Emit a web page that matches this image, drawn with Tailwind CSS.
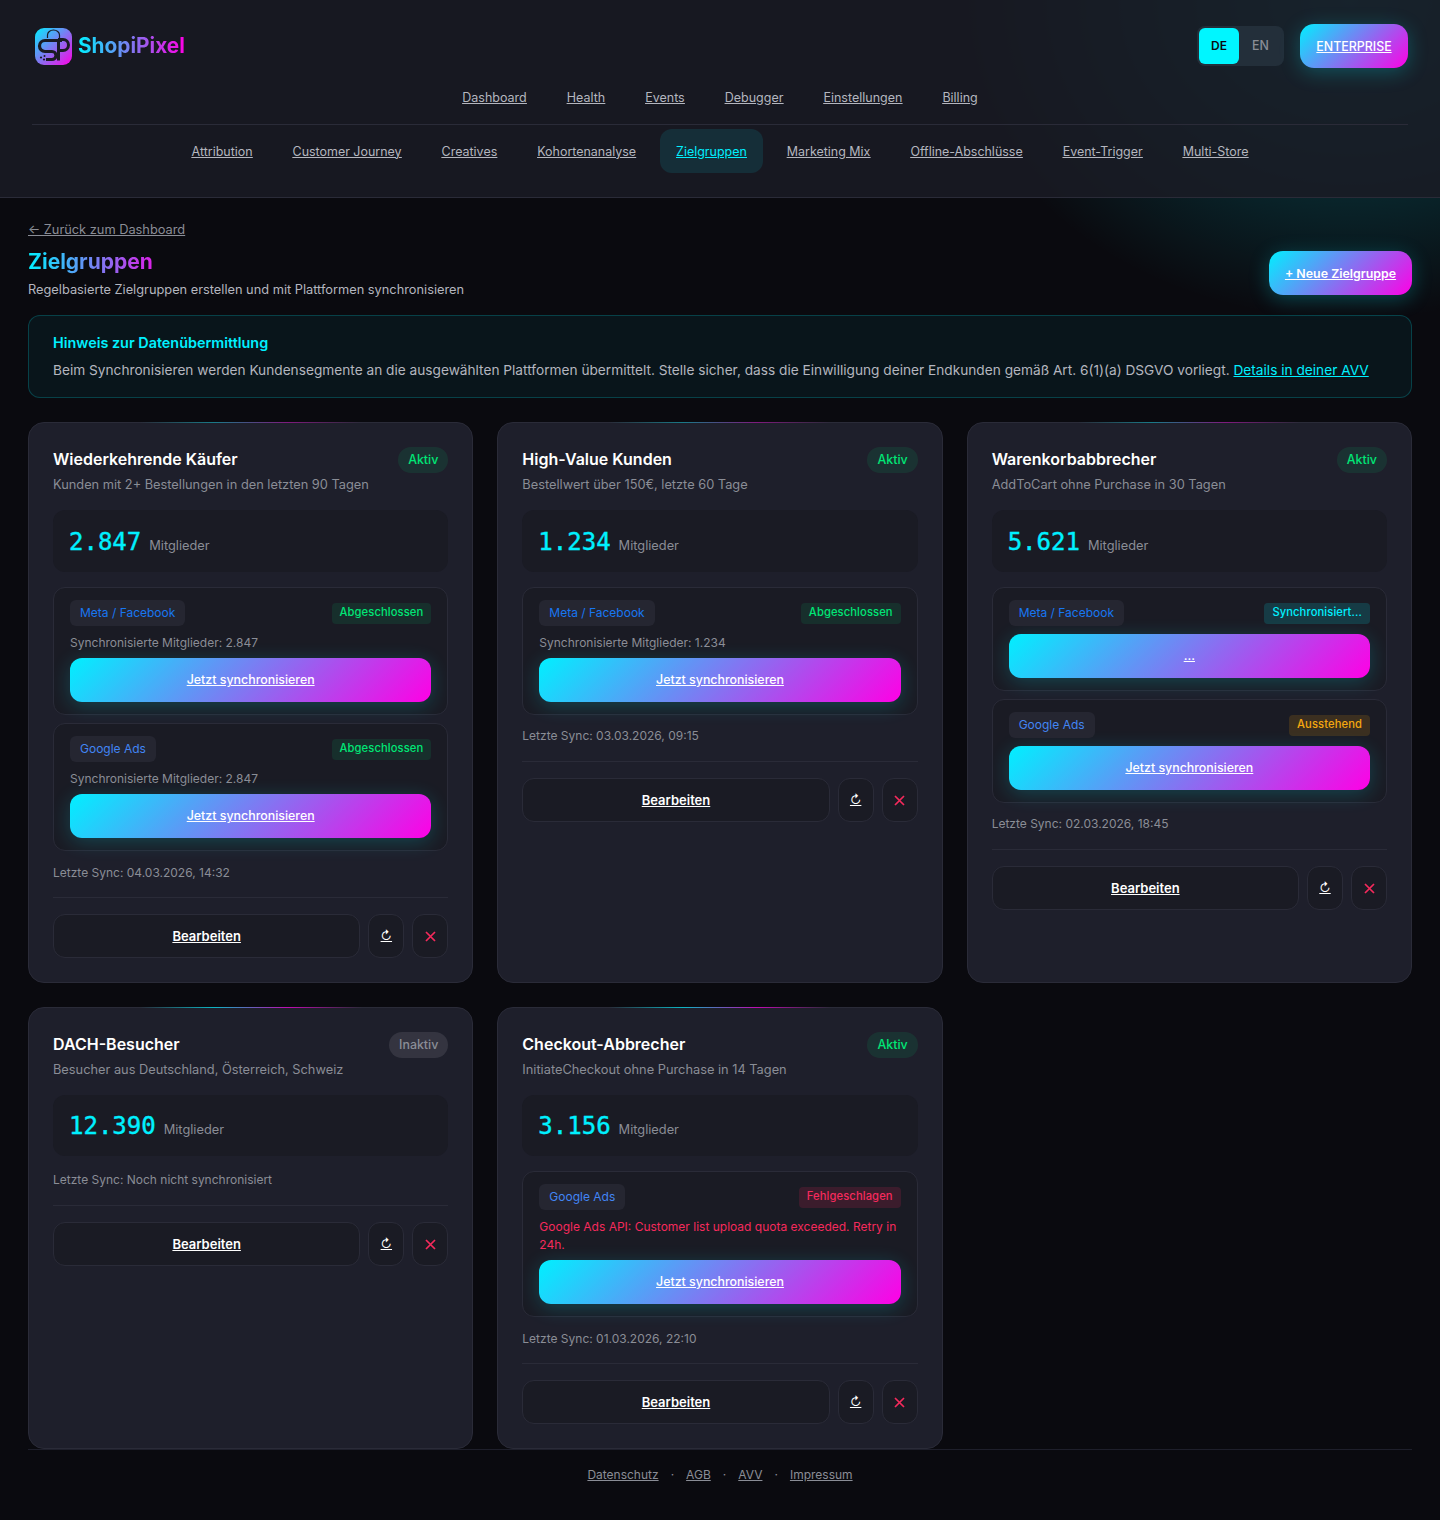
<!DOCTYPE html>
<html lang="de">
<head>
  <meta charset="UTF-8"/><meta name="viewport" content="width=device-width, initial-scale=1.0"/>
  <title>Zielgruppen – ShopiPixel</title>
  <script src="https://cdn.jsdelivr.net/npm/@tailwindcss/browser@4"></script>
</head>
<body class="bg-[#0a0a0f] font-['Inter',sans-serif] antialiased text-white">
<div class="relative h-[1520px] overflow-hidden">
  <!-- Glow oben rechts -->
  <div class="absolute top-[-320px] left-[950px] w-[800px] h-[640px] bg-[radial-gradient(closest-side,rgba(0,240,255,0.3),transparent)]"></div>

  <!-- Kopfbereich -->
  <header class="relative h-[198px] border-b border-[#2a2b38] bg-[#1a1b24]/85 px-8 pt-6">
    <div class="flex items-center justify-between h-11">
      <a class="flex items-center gap-[6px] pl-[3px]">
        <svg width="37" height="37" viewBox="0 0 37 37">
          <defs><linearGradient id="lg" x1="0" y1="0" x2="1" y2="1"><stop offset="0" stop-color="#00f0ff"/><stop offset="1" stop-color="#ff00e5"/></linearGradient></defs>
          <rect width="37" height="37" rx="9" fill="url(#lg)"/>
          <path d="M12.5 10V7a6 5 0 0 1 12 0v3" fill="none" stroke="#1a1b24" stroke-width="1.2"/>
          <path d="M27 12.5H10a5.5 5.5 0 0 0 0 11h7a4 4 0 0 1 0 8h-6" fill="none" stroke="#1a1b24" stroke-width="3.2"/>
          <path d="M23.5 12V32.5" fill="none" stroke="#1a1b24" stroke-width="3"/>
          <path d="M23 11.5h5a5.5 5.5 0 0 1 0 11h-5" fill="none" stroke="#1a1b24" stroke-width="3"/>
          <circle cx="6" cy="29.5" r="1.1" fill="#1a1b24"/><circle cx="9" cy="31.5" r="1.1" fill="#1a1b24"/><circle cx="9.5" cy="28" r="1" fill="#1a1b24"/>
        </svg>
        <span class="text-[20.8px] font-bold text-transparent bg-clip-text bg-[linear-gradient(90deg,#00f0ff,#ff00e5)]">ShopiPixel</span>
      </a>
      <div class="flex items-center gap-4">
        <div class="flex items-center h-10 p-0.5 rounded-lg bg-[#232f3a]">
          <span class="w-10 h-9 rounded-md bg-[#00f6ff] flex items-center justify-center text-xs font-semibold text-[#0a0a0f]">DE</span>
          <span class="w-[43px] h-9 flex items-center justify-center text-[12.4px] font-medium text-[#8a8d96]">EN</span>
        </div>
        <a class="h-11 w-[108px] pt-0.5 rounded-[14px] flex items-center justify-center text-[12.4px] font-medium underline bg-[linear-gradient(135deg,#00f0ff,#ff00e5)] shadow-[0_4px_20px_rgba(0,240,255,0.25)]">ENTERPRISE</a>
      </div>
    </div>
    <nav class="flex justify-center gap-2 mt-2 h-11 items-center text-[12.5px] text-[#b4b6bf] underline">
      <a class="px-4">Dashboard</a><a class="px-4">Health</a><a class="px-4">Events</a><a class="px-4">Debugger</a><a class="px-4">Einstellungen</a><a class="px-4">Billing</a>
    </nav>
    <nav class="flex justify-center gap-2 mt-1 pt-1 border-t border-[#2a2b38] h-[49px] items-center text-[12.46px] text-[#b4b6bf] underline [&>a]:pt-0.5">
      <a class="px-4">Attribution</a><a class="px-4">Customer Journey</a><a class="px-4">Creatives</a><a class="px-4">Kohortenanalyse</a>
      <a class="px-4 h-11 flex items-center rounded-xl bg-[#00f0ff]/10 text-[#00f0ff]">Zielgruppen</a>
      <a class="px-4">Marketing Mix</a><a class="px-4">Offline-Abschlüsse</a><a class="px-4">Event-Trigger</a><a class="px-4">Multi-Store</a>
    </nav>
  </header>

  <main class="relative px-7 pt-6">
    <a class="block text-[12.8px] leading-4 text-[#8a8d96] underline">← Zurück zum Dashboard</a>
    <div class="flex items-start justify-between">
      <div>
        <h1 class="mt-2.5 text-[21px] leading-7 font-bold text-transparent bg-clip-text bg-[linear-gradient(90deg,#00f0ff,#ff00e5)] w-[145px]">Zielgruppen</h1>
        <p class="mt-1 text-[12.8px] leading-5 text-[#b4b6bf]">Regelbasierte Zielgruppen erstellen und mit Plattformen synchronisieren</p>
      </div>
      <a class="mt-[13px] h-11 w-[143px] pt-0.5 rounded-[14px] flex items-center justify-center text-[12.4px] font-semibold underline bg-[linear-gradient(135deg,#00f0ff,#ff00e5)] shadow-[0_4px_20px_rgba(0,240,255,0.25)]">+ Neue Zielgruppe</a>
    </div>

    <div class="mt-[15px] h-[83px] rounded-xl border border-[#00f0ff]/20 bg-[#00f0ff]/5 px-6 pt-[17px]">
      <h2 class="text-[14.4px] leading-5 font-semibold text-[#00f0ff]">Hinweis zur Datenübermittlung</h2>
      <p class="mt-[7px] text-[13.68px] leading-5 text-[#b4b6bf]">Beim Synchronisieren werden Kundensegmente an die ausgewählten Plattformen übermittelt. Stelle sicher, dass die Einwilligung deiner Endkunden gemäß Art. 6(1)(a) DSGVO vorliegt. <a class="text-[#00f0ff] underline">Details in deiner AVV</a></p>
    </div>

    <div class="grid grid-cols-3 gap-6 mt-6">
      <!-- Wiederkehrende Käufer -->
      <section class="relative rounded-2xl border border-[#2a2b38] bg-[#1e1f2b] p-6 flex flex-col">
        <div class="absolute -top-px left-1/4 right-1/4 h-px opacity-40 bg-[linear-gradient(90deg,transparent,#00f0ff,#ff00e5,transparent)]"></div>
        <div class="flex items-start justify-between h-[26px]">
          <h3 class="text-base leading-6 font-semibold">Wiederkehrende Käufer</h3>
          <span class="h-[26px] px-2.5 rounded-full bg-[#00e676]/10 text-[#00e676] text-[12.4px] font-medium flex items-center">Aktiv</span>
        </div>
        <p class="mt-0.5 text-[12.8px] leading-5 text-[#8a8d96]">Kunden mit 2+ Bestellungen in den letzten 90 Tagen</p>
        <div class="mt-[15px] h-[62px] pt-0.5 rounded-xl bg-[#1a1b24] px-4 flex items-center gap-2">
          <span class="font-['DejaVu_Sans_Mono',monospace] text-2xl [-webkit-text-stroke:0.4px_#00f0ff] text-[#00f0ff]">2.847</span><span class="mt-2 text-[12.8px] text-[#8a8d96]">Mitglieder</span>
        </div>
        <div class="mt-[15px] rounded-xl border border-[#2a2b38] bg-[#1a1b24] px-4 py-3">
          <div class="flex items-center justify-between h-[26px]">
            <span class="h-[26px] px-2.5 rounded-md bg-[#252631] text-[#1877f2] text-xs flex items-center">Meta / Facebook</span>
            <span class="h-[21px] px-2 pb-0.5 rounded bg-[#00e676]/10 text-[#00e676] text-[11.2px] tracking-[0.1px] font-medium flex items-center">Abgeschlossen</span>
          </div>
          <p class="mt-[7px] text-xs leading-5 text-[#8a8d96]">Synchronisierte Mitglieder: 2.847</p>
          <a class="mt-[5px] h-11 rounded-xl flex items-center justify-center text-[12.4px] font-medium underline bg-[linear-gradient(135deg,#00f0ff,#ff00e5)] shadow-[0_4px_20px_rgba(0,240,255,0.2)]">Jetzt synchronisieren</a>
        </div>
        <div class="mt-2 rounded-xl border border-[#2a2b38] bg-[#1a1b24] px-4 py-3">
          <div class="flex items-center justify-between h-[26px]">
            <span class="h-[26px] px-2.5 rounded-md bg-[#252631] text-[#4285f4] text-xs flex items-center">Google Ads</span>
            <span class="h-[21px] px-2 pb-0.5 rounded bg-[#00e676]/10 text-[#00e676] text-[11.2px] tracking-[0.1px] font-medium flex items-center">Abgeschlossen</span>
          </div>
          <p class="mt-[7px] text-xs leading-5 text-[#8a8d96]">Synchronisierte Mitglieder: 2.847</p>
          <a class="mt-[5px] h-11 rounded-xl flex items-center justify-center text-[12.4px] font-medium underline bg-[linear-gradient(135deg,#00f0ff,#ff00e5)] shadow-[0_4px_20px_rgba(0,240,255,0.2)]">Jetzt synchronisieren</a>
        </div>
        <p class="mt-3 text-xs leading-5 text-[#8a8d96]">Letzte Sync: 04.03.2026, 14:32</p>
        <div class="mt-3.5 pt-4 border-t border-[#2a2b38] flex gap-2">
          <a class="flex-1 h-11 pt-0.5 rounded-xl border border-[#2a2b38] bg-[#1a1b24] flex items-center justify-center text-[13px] font-semibold underline">Bearbeiten</a>
          <a class="w-9 h-11 rounded-xl border border-[#2a2b38] bg-[#1a1b24] flex items-center justify-center text-xs underline">↻</a>
          <a class="w-9 h-11 rounded-xl border border-[#2a2b38] bg-[#1a1b24] flex items-center justify-center"><svg width="11" height="11" viewBox="0 0 11 11"><path d="M1 1l9 9M10 1l-9 9" stroke="#f52a5c" stroke-width="1.7" fill="none"/></svg></a>
        </div>
      </section>

      <!-- High-Value Kunden -->
      <section class="relative rounded-2xl border border-[#2a2b38] bg-[#1e1f2b] p-6 flex flex-col">
        <div class="absolute -top-px left-1/4 right-1/4 h-px opacity-40 bg-[linear-gradient(90deg,transparent,#00f0ff,#ff00e5,transparent)]"></div>
        <div class="flex items-start justify-between h-[26px]">
          <h3 class="text-base leading-6 font-semibold">High-Value Kunden</h3>
          <span class="h-[26px] px-2.5 rounded-full bg-[#00e676]/10 text-[#00e676] text-[12.4px] font-medium flex items-center">Aktiv</span>
        </div>
        <p class="mt-0.5 text-[12.8px] leading-5 text-[#8a8d96]">Bestellwert über 150€, letzte 60 Tage</p>
        <div class="mt-[15px] h-[62px] pt-0.5 rounded-xl bg-[#1a1b24] px-4 flex items-center gap-2">
          <span class="font-['DejaVu_Sans_Mono',monospace] text-2xl [-webkit-text-stroke:0.4px_#00f0ff] text-[#00f0ff]">1.234</span><span class="mt-2 text-[12.8px] text-[#8a8d96]">Mitglieder</span>
        </div>
        <div class="mt-[15px] rounded-xl border border-[#2a2b38] bg-[#1a1b24] px-4 py-3">
          <div class="flex items-center justify-between h-[26px]">
            <span class="h-[26px] px-2.5 rounded-md bg-[#252631] text-[#1877f2] text-xs flex items-center">Meta / Facebook</span>
            <span class="h-[21px] px-2 pb-0.5 rounded bg-[#00e676]/10 text-[#00e676] text-[11.2px] tracking-[0.1px] font-medium flex items-center">Abgeschlossen</span>
          </div>
          <p class="mt-[7px] text-xs leading-5 text-[#8a8d96]">Synchronisierte Mitglieder: 1.234</p>
          <a class="mt-[5px] h-11 rounded-xl flex items-center justify-center text-[12.4px] font-medium underline bg-[linear-gradient(135deg,#00f0ff,#ff00e5)] shadow-[0_4px_20px_rgba(0,240,255,0.2)]">Jetzt synchronisieren</a>
        </div>
        <p class="mt-[11px] text-xs leading-5 text-[#8a8d96]">Letzte Sync: 03.03.2026, 09:15</p>
        <div class="mt-[15px] pt-4 border-t border-[#2a2b38] flex gap-2">
          <a class="flex-1 h-11 pt-0.5 rounded-xl border border-[#2a2b38] bg-[#1a1b24] flex items-center justify-center text-[13px] font-semibold underline">Bearbeiten</a>
          <a class="w-9 h-11 rounded-xl border border-[#2a2b38] bg-[#1a1b24] flex items-center justify-center text-xs underline">↻</a>
          <a class="w-9 h-11 rounded-xl border border-[#2a2b38] bg-[#1a1b24] flex items-center justify-center"><svg width="11" height="11" viewBox="0 0 11 11"><path d="M1 1l9 9M10 1l-9 9" stroke="#f52a5c" stroke-width="1.7" fill="none"/></svg></a>
        </div>
      </section>

      <!-- Warenkorbabbrecher -->
      <section class="relative rounded-2xl border border-[#2a2b38] bg-[#1e1f2b] p-6 flex flex-col">
        <div class="absolute -top-px left-1/4 right-1/4 h-px opacity-40 bg-[linear-gradient(90deg,transparent,#00f0ff,#ff00e5,transparent)]"></div>
        <div class="flex items-start justify-between h-[26px]">
          <h3 class="text-base leading-6 font-semibold">Warenkorbabbrecher</h3>
          <span class="h-[26px] px-2.5 rounded-full bg-[#00e676]/10 text-[#00e676] text-[12.4px] font-medium flex items-center">Aktiv</span>
        </div>
        <p class="mt-0.5 text-[12.8px] leading-5 text-[#8a8d96]">AddToCart ohne Purchase in 30 Tagen</p>
        <div class="mt-[15px] h-[62px] pt-0.5 rounded-xl bg-[#1a1b24] px-4 flex items-center gap-2">
          <span class="font-['DejaVu_Sans_Mono',monospace] text-2xl [-webkit-text-stroke:0.4px_#00f0ff] text-[#00f0ff]">5.621</span><span class="mt-2 text-[12.8px] text-[#8a8d96]">Mitglieder</span>
        </div>
        <div class="mt-[15px] rounded-xl border border-[#2a2b38] bg-[#1a1b24] px-4 py-3">
          <div class="flex items-center justify-between h-[26px]">
            <span class="h-[26px] px-2.5 rounded-md bg-[#252631] text-[#1877f2] text-xs flex items-center">Meta / Facebook</span>
            <span class="h-[21px] px-2 pb-0.5 rounded bg-[#00f0ff]/15 text-[#00f0ff] text-[11.2px] tracking-[0.1px] font-medium flex items-center">Synchronisiert...</span>
          </div>
          <a class="mt-2 h-11 rounded-xl flex items-center justify-center text-[12.4px] font-medium underline bg-[linear-gradient(135deg,#00f0ff,#ff00e5)] shadow-[0_4px_20px_rgba(0,240,255,0.2)]">...</a>
        </div>
        <div class="mt-2 rounded-xl border border-[#2a2b38] bg-[#1a1b24] px-4 py-3">
          <div class="flex items-center justify-between h-[26px]">
            <span class="h-[26px] px-2.5 rounded-md bg-[#252631] text-[#4285f4] text-xs flex items-center">Google Ads</span>
            <span class="h-[21px] px-2 pb-0.5 rounded bg-[#f5a70f]/15 text-[#f5a70f] text-[11.2px] tracking-[0.1px] font-medium flex items-center">Ausstehend</span>
          </div>
          <a class="mt-2 h-11 rounded-xl flex items-center justify-center text-[12.4px] font-medium underline bg-[linear-gradient(135deg,#00f0ff,#ff00e5)] shadow-[0_4px_20px_rgba(0,240,255,0.2)]">Jetzt synchronisieren</a>
        </div>
        <p class="mt-[11px] text-xs leading-5 text-[#8a8d96]">Letzte Sync: 02.03.2026, 18:45</p>
        <div class="mt-[15px] pt-4 border-t border-[#2a2b38] flex gap-2">
          <a class="flex-1 h-11 pt-0.5 rounded-xl border border-[#2a2b38] bg-[#1a1b24] flex items-center justify-center text-[13px] font-semibold underline">Bearbeiten</a>
          <a class="w-9 h-11 rounded-xl border border-[#2a2b38] bg-[#1a1b24] flex items-center justify-center text-xs underline">↻</a>
          <a class="w-9 h-11 rounded-xl border border-[#2a2b38] bg-[#1a1b24] flex items-center justify-center"><svg width="11" height="11" viewBox="0 0 11 11"><path d="M1 1l9 9M10 1l-9 9" stroke="#f52a5c" stroke-width="1.7" fill="none"/></svg></a>
        </div>
      </section>

      <!-- DACH-Besucher -->
      <section class="relative rounded-2xl border border-[#2a2b38] bg-[#1e1f2b] p-6 flex flex-col">
        <div class="absolute -top-px left-1/4 right-1/4 h-px opacity-70 bg-[linear-gradient(90deg,transparent,#00f0ff,#ff00e5,transparent)]"></div>
        <div class="flex items-start justify-between h-[26px]">
          <h3 class="text-base leading-6 font-semibold">DACH-Besucher</h3>
          <span class="h-[26px] px-2.5 rounded-full bg-[#8a8d96]/20 text-[#8a8d96] text-[12.4px] font-medium flex items-center">Inaktiv</span>
        </div>
        <p class="mt-0.5 text-[12.8px] leading-5 text-[#8a8d96]">Besucher aus Deutschland, Österreich, Schweiz</p>
        <div class="mt-[15px] h-[61px] rounded-xl bg-[#1a1b24] px-4 flex items-center gap-2">
          <span class="font-['DejaVu_Sans_Mono',monospace] text-2xl [-webkit-text-stroke:0.4px_#00f0ff] text-[#00f0ff]">12.390</span><span class="mt-2 text-[12.8px] text-[#8a8d96]">Mitglieder</span>
        </div>
        <p class="mt-3.5 text-xs leading-5 text-[#8a8d96]">Letzte Sync: Noch nicht synchronisiert</p>
        <div class="mt-[15px] pt-4 border-t border-[#2a2b38] flex gap-2">
          <a class="flex-1 h-11 pt-0.5 rounded-xl border border-[#2a2b38] bg-[#1a1b24] flex items-center justify-center text-[13px] font-semibold underline">Bearbeiten</a>
          <a class="w-9 h-11 rounded-xl border border-[#2a2b38] bg-[#1a1b24] flex items-center justify-center text-xs underline">↻</a>
          <a class="w-9 h-11 rounded-xl border border-[#2a2b38] bg-[#1a1b24] flex items-center justify-center"><svg width="11" height="11" viewBox="0 0 11 11"><path d="M1 1l9 9M10 1l-9 9" stroke="#f52a5c" stroke-width="1.7" fill="none"/></svg></a>
        </div>
      </section>

      <!-- Checkout-Abbrecher -->
      <section class="relative rounded-2xl border border-[#2a2b38] bg-[#1e1f2b] p-6 flex flex-col">
        <div class="absolute -top-px left-1/4 right-1/4 h-px opacity-70 bg-[linear-gradient(90deg,transparent,#00f0ff,#ff00e5,transparent)]"></div>
        <div class="flex items-start justify-between h-[26px]">
          <h3 class="text-base leading-6 font-semibold">Checkout-Abbrecher</h3>
          <span class="h-[26px] px-2.5 rounded-full bg-[#00e676]/10 text-[#00e676] text-[12.4px] font-medium flex items-center">Aktiv</span>
        </div>
        <p class="mt-0.5 text-[12.8px] leading-5 text-[#8a8d96]">InitiateCheckout ohne Purchase in 14 Tagen</p>
        <div class="mt-[15px] h-[61px] rounded-xl bg-[#1a1b24] px-4 flex items-center gap-2">
          <span class="font-['DejaVu_Sans_Mono',monospace] text-2xl [-webkit-text-stroke:0.4px_#00f0ff] text-[#00f0ff]">3.156</span><span class="mt-2 text-[12.8px] text-[#8a8d96]">Mitglieder</span>
        </div>
        <div class="mt-[15px] rounded-xl border border-[#2a2b38] bg-[#1a1b24] px-4 py-3">
          <div class="flex items-center justify-between h-[26px]">
            <span class="h-[26px] px-2.5 rounded-md bg-[#252631] text-[#4285f4] text-xs flex items-center">Google Ads</span>
            <span class="h-[21px] px-2 pb-0.5 rounded bg-[#f52a5c]/15 text-[#f52a5c] text-[11.2px] tracking-[0.1px] font-medium flex items-center">Fehlgeschlagen</span>
          </div>
          <p class="mt-2 text-xs leading-[18px] text-[#f52a5c]">Google Ads API: Customer list upload quota exceeded. Retry in 24h.</p>
          <a class="mt-1.5 h-11 rounded-xl flex items-center justify-center text-[12.4px] font-medium underline bg-[linear-gradient(135deg,#00f0ff,#ff00e5)] shadow-[0_4px_20px_rgba(0,240,255,0.2)]">Jetzt synchronisieren</a>
        </div>
        <p class="mt-3 text-xs leading-5 text-[#8a8d96]">Letzte Sync: 01.03.2026, 22:10</p>
        <div class="mt-3.5 pt-4 border-t border-[#2a2b38] flex gap-2">
          <a class="flex-1 h-11 pt-0.5 rounded-xl border border-[#2a2b38] bg-[#1a1b24] flex items-center justify-center text-[13px] font-semibold underline">Bearbeiten</a>
          <a class="w-9 h-11 rounded-xl border border-[#2a2b38] bg-[#1a1b24] flex items-center justify-center text-xs underline">↻</a>
          <a class="w-9 h-11 rounded-xl border border-[#2a2b38] bg-[#1a1b24] flex items-center justify-center"><svg width="11" height="11" viewBox="0 0 11 11"><path d="M1 1l9 9M10 1l-9 9" stroke="#f52a5c" stroke-width="1.7" fill="none"/></svg></a>
        </div>
      </section>
    </div>

    <footer class="border-t border-[#1e1f2b] pt-[15px] flex justify-center gap-3 text-xs leading-5 text-[#8a8d96]">
      <a class="underline">Datenschutz</a><span>·</span><a class="underline">AGB</a><span>·</span><a class="underline">AVV</a><span>·</span><a class="underline">Impressum</a>
    </footer>
  </main>
</div>
</body>
</html>
